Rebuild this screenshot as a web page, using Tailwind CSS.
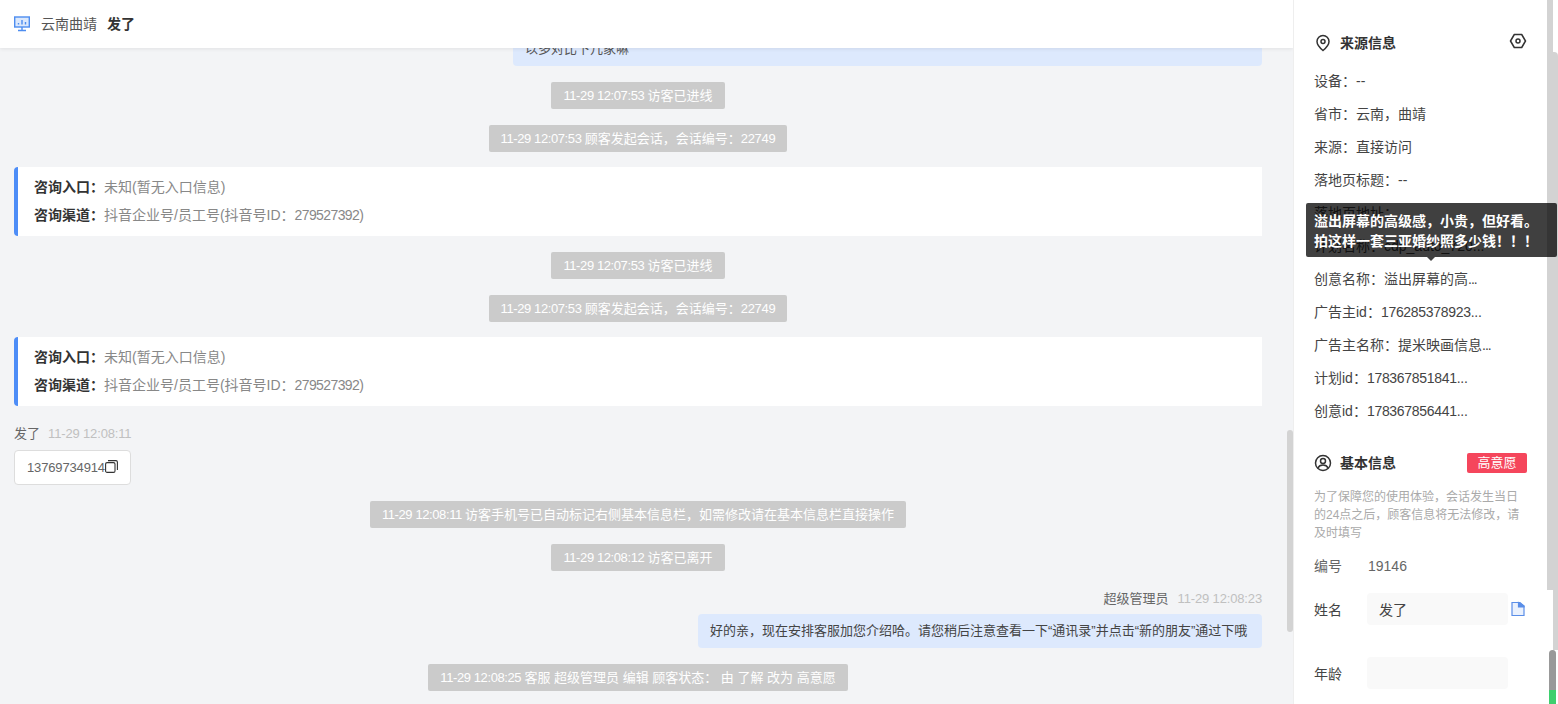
<!DOCTYPE html>
<html lang="zh-CN">

<head>
    <meta charset="UTF-8" />
    <title>会话详情</title>
    <script src="https://cdn.jsdelivr.net/npm/@tailwindcss/browser@4"></script>
</head>

<body class="h-[704px] w-[1558px] overflow-hidden bg-white text-[13px] text-[#333] font-['Liberation_Sans','Noto_Sans_CJK_SC',sans-serif]">
    <div class="flex h-full">
        <!-- 会话区 -->
        <main class="relative h-full w-[1293px] overflow-hidden bg-[#f3f4f6]">
            <header class="absolute top-0 left-0 z-10 flex h-12 w-full items-center bg-white pl-[14px] text-sm shadow-[0_1px_4px_rgba(0,0,0,0.08)]">
                <svg class="h-[16px] w-[16px]" viewBox="0 0 16 16" fill="none" stroke="#4d8df0" stroke-width="1.4">
                    <rect x="0.700" y="1" width="14.600" height="10" fill="#dbe8fc" />
                    <path d="M4.500 8.500V7M8 8.500V4M11.500 8.500V6M8 11v3.500M4 14.500h8" />
                </svg>
                <span class="ml-[11px] text-[#555]">云南曲靖</span>
                <span class="ml-[10px] font-bold text-[#333]">发了</span>
            </header>

            <div class="flex flex-col pt-[32px] pr-[31px] pl-[14px]">
                <div class="flex justify-end">
                    <div class="h-[34px] w-[749px] rounded bg-[#dde9fd] px-3 pt-[7px] text-[#555]">以多对比下几家嘛</div>
                </div>

                <div class="mt-4 flex justify-center"><span class="flex h-[27px] items-center rounded-[2px] bg-[#cbcbcb] px-3 text-white"><span class="tracking-[-0.4px] whitespace-pre">11-29 12:07:53 </span>访客已进线</span></div>
                <div class="mt-4 flex justify-center"><span class="flex h-[27px] items-center rounded-[2px] bg-[#cbcbcb] px-3 text-white"><span class="tracking-[-0.4px] whitespace-pre">11-29 12:07:53 </span>顾客发起会话，会话编号：<span class="tracking-[-0.3px]">22749</span></span></div>

                <div class="mt-[15px] flex h-[69px] flex-col justify-center gap-[9px] rounded-l border-l-4 border-[#4d8df7] bg-white pl-[16px] text-sm">
                    <p class="leading-[19px] text-[#888]"><b class="text-[#333]">咨询入口：</b>未知(暂无入口信息)</p>
                    <p class="leading-[19px] text-[#888]"><b class="text-[#333]">咨询渠道：</b>抖音企业号/员工号(抖音号ID：<span class="tracking-[-0.6px]">279527392)</span></p>
                </div>

                <div class="mt-4 flex justify-center"><span class="flex h-[27px] items-center rounded-[2px] bg-[#cbcbcb] px-3 text-white"><span class="tracking-[-0.4px] whitespace-pre">11-29 12:07:53 </span>访客已进线</span></div>
                <div class="mt-4 flex justify-center"><span class="flex h-[27px] items-center rounded-[2px] bg-[#cbcbcb] px-3 text-white"><span class="tracking-[-0.4px] whitespace-pre">11-29 12:07:53 </span>顾客发起会话，会话编号：<span class="tracking-[-0.3px]">22749</span></span></div>

                <div class="mt-[15px] flex h-[69px] flex-col justify-center gap-[9px] rounded-l border-l-4 border-[#4d8df7] bg-white pl-[16px] text-sm">
                    <p class="leading-[19px] text-[#888]"><b class="text-[#333]">咨询入口：</b>未知(暂无入口信息)</p>
                    <p class="leading-[19px] text-[#888]"><b class="text-[#333]">咨询渠道：</b>抖音企业号/员工号(抖音号ID：<span class="tracking-[-0.6px]">279527392)</span></p>
                </div>

                <div class="mt-[18px] flex items-center gap-2 leading-[19px]">
                    <span class="text-[#666]">发了</span><span class="tracking-[-0.15px] text-[#c0c0c0]">11-29 12:08:11</span>
                </div>
                <div class="mt-[7px]">
                    <div class="inline-flex h-[35px] w-[117px] items-center rounded border border-[#ddd] bg-white pl-3 text-[#666]">
                        <span class="tracking-[-0.15px]">13769734914</span>
                        <svg class="mb-[2px] h-[13px] w-[13px] shrink-0" viewBox="0 0 13 13" fill="none" stroke="#333" stroke-width="1.1">
                            <rect x="0.600" y="2.600" width="9.400" height="9.800" rx="1.500" />
                            <path d="M3 0.600h8A1.500 1.500 0 0 1 12.400 2v8" />
                        </svg>
                    </div>
                </div>

                <div class="mt-4 flex justify-center"><span class="flex h-[27px] items-center rounded-[2px] bg-[#cbcbcb] px-3 text-white"><span class="tracking-[-0.4px] whitespace-pre">11-29 12:08:11 </span>访客手机号已自动标记右侧基本信息栏，如需修改请在基本信息栏直接操作</span></div>
                <div class="mt-4 flex justify-center"><span class="flex h-[27px] items-center rounded-[2px] bg-[#cbcbcb] px-3 text-white"><span class="tracking-[-0.4px] whitespace-pre">11-29 12:08:12 </span>访客已离开</span></div>

                <div class="mt-[18px] flex justify-end gap-[9px] leading-[19px]">
                    <span class="text-[#666]">超级管理员</span><span class="tracking-[-0.15px] text-[#c0c0c0]">11-29 12:08:23</span>
                </div>
                <div class="mt-[6px] flex justify-end">
                    <div class="flex h-[34px] w-[564px] items-center rounded bg-[#dde9fd] pl-3 whitespace-nowrap text-[#444]">好的亲，现在安排客服加您介绍哈。请您稍后注意查看一下“通讯录”并点击“新的朋友”通过下哦</div>
                </div>

                <div class="mt-4 flex justify-center"><span class="flex h-[27px] items-center rounded-[2px] bg-[#cbcbcb] px-3 text-white"><span class="tracking-[-0.4px] whitespace-pre">11-29 12:08:25 </span>客服 超级管理员 编辑 顾客状态： 由 了解 改为 高意愿</span></div>
            </div>

            <!-- 滚动条 -->
            <div class="absolute top-[430px] right-0 h-[202px] w-[6px] rounded bg-[#d3d3d3]"></div>
        </main>

        <!-- 右侧信息栏 -->
        <aside class="relative h-full w-[254px] border-l border-[#eee] bg-white pl-5 text-sm text-[#444]">
            <div class="mt-[33px] flex h-[20px] items-center pr-[20px]">
                <svg class="h-[18px] w-[18px]" viewBox="0 0 18 18" fill="none" stroke="#333" stroke-width="1.500">
                    <path d="M9 1.500a6 6 0 0 1 6 6c0 4-6 9-6 9s-6-5-6-9a6 6 0 0 1 6-6z" />
                    <circle cx="9" cy="7.500" r="2" />
                </svg>
                <b class="ml-2 text-[#333]">来源信息</b>
                <svg class="mr-0 -mt-[4px] ml-auto h-[18px] w-[18px]" viewBox="0 0 18 18" fill="none" stroke="#333" stroke-width="1.500" stroke-linejoin="round">
                    <path d="M5.300 2.500h7.400L16.500 9l-3.800 6.500H5.300L1.500 9z" />
                    <circle cx="9" cy="9" r="2" />
                </svg>
            </div>
            <ul class="mt-[12px] flex flex-col">
                <li class="h-[33px] leading-[33px]">设备：--</li>
                <li class="h-[33px] leading-[33px]">省市：云南，曲靖</li>
                <li class="h-[33px] leading-[33px]">来源：直接访问</li>
                <li class="h-[33px] leading-[33px]">落地页标题：--</li>
                <li class="h-[33px] leading-[33px]">落地页地址：</li>
                <li class="h-[33px] leading-[33px]">计划名称：cdp_auto_720...</li>
                <li class="h-[33px] leading-[33px]">创意名称：溢出屏幕的高<span class="tracking-[-1px]">...</span></li>
                <li class="h-[33px] leading-[33px]">广告主id：<span class="tracking-[-0.3px]">176285378923...</span></li>
                <li class="h-[33px] leading-[33px]">广告主名称：提米映画信息<span class="tracking-[-1px]">...</span></li>
                <li class="h-[33px] leading-[33px]">计划id：<span class="tracking-[-0.3px]">178367851841...</span></li>
                <li class="h-[33px] leading-[33px]">创意id：<span class="tracking-[-0.3px]">178367856441...</span></li>
            </ul>

            <div class="mt-[25px] flex h-[20px] items-center pr-5">
                <svg class="h-[18px] w-[18px]" viewBox="0 0 18 18" fill="none" stroke="#333" stroke-width="1.500">
                    <circle cx="9" cy="9" r="7.500" />
                    <circle cx="9" cy="7" r="2.500" />
                    <path d="M4 14c1-2.500 3-3 5-3s4 .5 5 3" />
                </svg>
                <b class="ml-2 text-[#333]">基本信息</b>
                <span class="ml-auto flex h-5 w-[60px] items-center justify-center rounded-[2px] bg-[#f5465c] text-[13px] text-white">高意愿</span>
            </div>
            <p class="mt-[15px] w-[214px] text-xs leading-[18px] text-[#aaa]">为了保障您的使用体验，会话发生当日的24点之后，顾客信息将无法修改，请及时填写</p>

            <div class="mt-[14px] flex h-[20px] items-center text-[#666]">
                <span class="w-[54px]">编号</span><span>19146</span>
            </div>
            <div class="mt-[17px] flex items-center">
                <span class="w-[53px] pt-[2px]">姓名</span>
                <div class="flex h-8 w-[141px] items-center rounded bg-[#f9f9f9] pl-3 pt-[2px]">发了</div>
                <svg class="ml-[2px] h-[16px] w-[16px]" viewBox="0 0 16 16" fill="#eaf1fd" stroke="#5a8ee8" stroke-width="1.200">
                    <path d="M2 1.500h8l4 3.500v9.500H2z" />
                    <path d="M8.500 1.500l5.500 3.500v1h-5.500z" fill="#5a8ee8" />
                </svg>
            </div>
            <div class="mt-[32px] flex items-center">
                <span class="w-[53px] pt-[2px]">年龄</span>
                <div class="h-8 w-[141px] rounded bg-[#f9f9f9]"></div>
            </div>

            <!-- 提示框 -->
            <div class="absolute top-[203px] left-[12px] z-20 w-[251px] rounded-[2px] bg-black/75 px-2 pt-2 pb-[6px] leading-[20px] font-bold text-white">
                溢出屏幕的高级感，小贵，但好看。<br />拍这样一套三亚婚纱照多少钱！！！
                <span class="absolute top-full left-[121px] h-0 w-0 border-x-[4px] border-t-[4px] border-x-transparent border-t-black/75"></span>
            </div>
        </aside>

        <!-- 页面滚动条 -->
        <div class="relative h-full w-[11px] bg-white">
            <div class="h-[52px] w-[6px] bg-[#d3d3d3]"></div>
            <div class="h-[538px] w-full rounded-tr-sm bg-[#d3d3d3]"></div>
            <div class="ml-[6px] h-[60px] w-[5px] bg-[#d3d3d3]"></div>
            <div class="absolute top-[650px] left-[2px] h-[40px] w-[7px] rounded-t bg-[#999]"></div>
            <div class="absolute top-[690px] left-[2px] h-[14px] w-[7px] bg-[#3ecf6e]"></div>
        </div>
    </div>
</body>

</html>
